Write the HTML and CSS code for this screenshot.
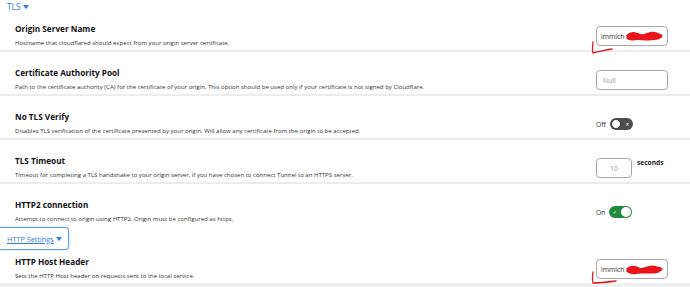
FILE: index.html
```html
<!DOCTYPE html>
<html>
<head>
<meta charset="utf-8">
<link rel="stylesheet" href="styles.css">
</head>
<body>
<div class="page">
  <div class="section-head">TLS <span class="caret"></span></div>

  <div class="row row-first">
    <div class="info">
      <div class="title">Origin Server Name</div>
      <div class="desc">Hostname that cloudflared should expect from your origin server certificate.</div>
    </div>
    <div class="ctrl">
      <div class="field">
        <span class="value">immich</span>
        <svg class="scribble" width="40" height="14" viewBox="0 0 42 14"><path d="M3 8 C7 3 12 4 16 6 C21 9 26 3 31 4 C35 5 38 6 39 7 C37 9 33 10 28 10 C22 11 17 9 11 10 C7 11 5 10 3 8" fill="#e8161b" stroke="#e8161b" stroke-width="3" stroke-linejoin="round"/></svg>
      </div>
      <svg class="tick" width="24" height="14" viewBox="0 0 24 14"><path d="M2 1 C1.5 5 1 9 2 12 C8 11 14 9 21 8" fill="none" stroke="#e01b1b" stroke-width="1.3" stroke-linecap="round"/></svg>
    </div>
  </div>

  <div class="row">
    <div class="info">
      <div class="title">Certificate Authority Pool</div>
      <div class="desc">Path to the certificate authority (CA) for the certificate of your origin. This option should be used only if your certificate is not signed by Cloudflare.</div>
    </div>
    <div class="ctrl">
      <div class="field"><span class="placeholder">Null</span></div>
    </div>
  </div>

  <div class="row">
    <div class="info">
      <div class="title">No TLS Verify</div>
      <div class="desc">Disables TLS verification of the certificate presented by your origin. Will allow any certificate from the origin to be accepted.</div>
    </div>
    <div class="ctrl">
      <span class="toggle-label">Off</span>
      <span class="toggle toggle-off"><span class="knob"></span><span class="mark">✕</span></span>
    </div>
  </div>

  <div class="row">
    <div class="info">
      <div class="title">TLS Timeout</div>
      <div class="desc">Timeout for completing a TLS handshake to your origin server, if you have chosen to connect Tunnel to an HTTPS server.</div>
    </div>
    <div class="ctrl">
      <div class="field field-small"><span class="placeholder center">10</span></div>
      <span class="unit">seconds</span>
    </div>
  </div>

  <div class="row row-noborder">
    <div class="info">
      <div class="title">HTTP2 connection</div>
      <div class="desc">Attempt to connect to origin using HTTP2. Origin must be configured as https.</div>
    </div>
    <div class="ctrl">
      <span class="toggle-label">On</span>
      <span class="toggle toggle-on"><span class="mark">✓</span><span class="knob"></span></span>
    </div>
  </div>

  <div class="http-btn"><span class="link">HTTP Settings</span> <span class="caret"></span></div>

  <div class="row row-last">
    <div class="info">
      <div class="title">HTTP Host Header</div>
      <div class="desc">Sets the HTTP Host header on requests sent to the local service.</div>
    </div>
    <div class="ctrl">
      <div class="field">
        <span class="value">immich</span>
        <svg class="scribble" width="40" height="14" viewBox="0 0 42 14"><path d="M3 8 C7 4 12 5 16 7 C21 9 26 4 31 5 C35 6 38 6 39 7 C37 9 33 11 28 10 C22 10 17 10 11 11 C7 11 5 10 3 8" fill="#e8161b" stroke="#e8161b" stroke-width="3" stroke-linejoin="round"/></svg>
      </div>
      <svg class="tick tick-2" width="28" height="14" viewBox="0 0 28 14"><path d="M2 1 C1.5 5 1 9 2 12 C9 12 17 11 25 10" fill="none" stroke="#e01b1b" stroke-width="1.3" stroke-linecap="round"/></svg>
    </div>
  </div>
</div>
</body>
</html>
```
FILE: styles.css
```css
html, body {
  margin: 0;
  padding: 0;
  background: #ffffff;
}
body {
  font-family: "Open Sans", "Noto Sans", sans-serif;
  color: #222222;
}
.page {
  width: 690px;
}
.section-head {
  height: 13px;
  line-height: 13px;
  padding-left: 7px;
  font-size: 8.4px;
  color: #2b7de9;
  display: flex;
  align-items: center;
  gap: 2px;
}
.caret {
  display: inline-block;
  width: 0;
  height: 0;
  border-left: 3px solid transparent;
  border-right: 3px solid transparent;
  border-top: 4px solid #2b7de9;
}
.row {
  display: flex;
  align-items: center;
  padding: 15px 0 1px 15px;
  border-bottom: 2px solid #ececec;
}
.row-first {
  padding-top: 10px;
}
.row-noborder {
  border-bottom: none;
}
.row-last {
  padding-top: 6px;
  border-bottom: 4px solid #efefef;
}
.info {
  flex: 1;
  min-width: 0;
}
.title {
  font-size: 8.2px;
  font-weight: 700;
  line-height: 12px;
  color: #111111;
}
.desc {
  margin-top: 2px;
  font-size: 6.05px;
  line-height: 12px;
  color: #333333;
  white-space: nowrap;
}
.ctrl {
  width: 94px;
  flex: none;
  display: flex;
  align-items: center;
  position: relative;
}
.field {
  position: relative;
  width: 72px;
  height: 20px;
  box-sizing: border-box;
  border: 1px solid #a9a9a9;
  border-radius: 4px;
  display: flex;
  align-items: center;
  padding-left: 4px;
  font-size: 6.8px;
  background: #fff;
}
.field-small {
  width: 36px;
  padding-left: 0;
  justify-content: center;
}
.value {
  color: #333;
}
.placeholder {
  color: #9a9a9a;
  padding-left: 2px;
}
.placeholder.center {
  padding-left: 0;
}
.scribble {
  position: absolute;
  left: 27px;
  top: 2px;
}
.tick {
  position: absolute;
  left: -5px;
  top: 15px;
}
.tick-2 {
  left: -5px;
  top: 12px;
}
.unit {
  margin-left: 5px;
  font-size: 6.6px;
  font-weight: 700;
  color: #222;
  align-self: flex-start;
}
.toggle-label {
  font-size: 6.8px;
  color: #333;
  margin-right: 4px;
}
.toggle {
  width: 23px;
  height: 12px;
  border-radius: 6px;
  box-sizing: border-box;
  display: flex;
  align-items: center;
  justify-content: space-between;
  padding: 0 1px;
}
.toggle-off {
  background: #4d4d4d;
}
.toggle-on {
  background: #1f8a3c;
}
.knob {
  width: 10px;
  height: 10px;
  border-radius: 50%;
  background: #ffffff;
  box-sizing: border-box;
}
.toggle-off .knob {
  border: 1px solid #333;
}
.mark {
  color: #fff;
  font-size: 5px;
  width: 9px;
  text-align: center;
  line-height: 10px;
  font-family: "DejaVu Sans", sans-serif;
}
.http-btn {
  margin-top: 1px;
  width: 69px;
  height: 23px;
  box-sizing: border-box;
  border: 1px solid #5b9ef5;
  border-left: none;
  border-radius: 0 4px 4px 0;
  box-shadow: 0 0 2px rgba(60, 140, 240, 0.5);
  display: flex;
  align-items: center;
  padding-left: 7px;
  gap: 2px;
  font-size: 7.3px;
  color: #2b7de9;
}
.link {
  text-decoration: underline;
}
```
